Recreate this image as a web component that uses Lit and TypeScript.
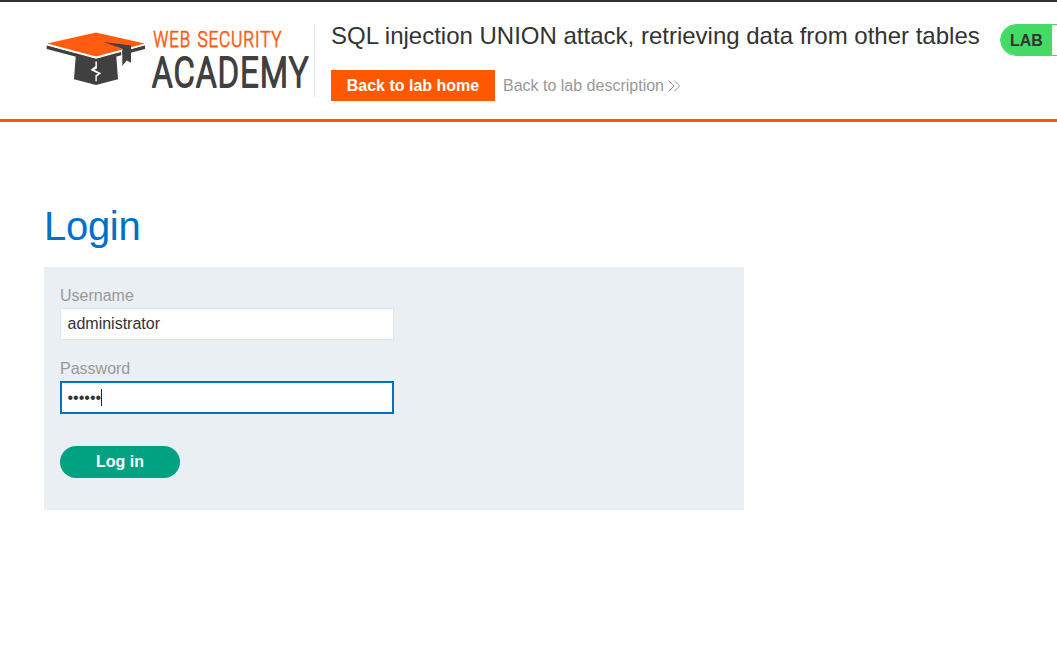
import { LitElement, html, css } from "lit";
import { customElement } from "lit/decorators.js";

@customElement("academy-logo")
class AcademyLogo extends LitElement {
  static styles = css`
    :host { display: block; width: 270px; height: 73px; flex: none; }
    svg { display: block; overflow: visible; }
    .small { font: 300 21.5px Roboto, sans-serif; fill: #ff5c0f; stroke: #ff5c0f; stroke-width: 0.75; stroke-linejoin: round; letter-spacing: 1px; }
    .large { font: 300 42px Roboto, sans-serif; fill: #404041; stroke: #404041; stroke-width: 2.2; stroke-linejoin: round; letter-spacing: 2px; }
  `;
  render() {
    return html`<svg width="270" height="73" viewBox="44 24 270 73" role="img" aria-label="Web Security Academy">
      <path fill="#404041" d="M76 52.5 L96 58 L116 52.5 L118 79.3 L96 85 L74 79.3 Z" />
      <path fill="#404041" d="M46.7 45.2 L96 58.6 L145 45.2 V49 L96 62 L46.7 49 Z" />
      <path fill="#fff" d="M44 42 H148 L145 45.3 L96 58.8 L46.7 45.3 Z" />
      <path fill="#ff5c0f" d="M47.2 43.4 L96 32.6 L144.8 43.4 L96 56.6 Z" />
      <path fill="#fff" d="M121.2 50 L122.3 49.6 V57 H121.2 Z" />
      <path fill="#404041" d="M103.3 42 L131 45.4 V62.8 L126.8 60.5 L122.3 65.7 V48.5 Z" />
      <path fill="#fff" d="M95.4 61.5 H96.9 V68.5 L94.3 69.7 L101.2 73.2 L96.8 76.6 V81.2 H95.4 V75.2 L98.2 73.7 L90.5 69.9 L95.4 66 Z" />
      <text class="small" x="153.3" y="47.2" textLength="37.5" lengthAdjust="spacingAndGlyphs">WEB</text>
      <text class="small" x="197.5" y="47.2" textLength="85" lengthAdjust="spacingAndGlyphs">SECURITY</text>
      <text class="large" x="152.3" y="87" textLength="157.5" lengthAdjust="spacingAndGlyphs">ACADEMY</text>
    </svg>`;
  }
}

@customElement("app-root")
class AppRoot extends LitElement {
  static styles = css`
    :host { display: block; height: 645px; overflow: hidden; background: #fff; color: #333332; font: 16px/20px "Liberation Sans", Arial, sans-serif; }
    * { box-sizing: border-box; }
    .header { display: flex; height: 122px; padding: 22px 0 0 44px; border-top: 2px solid #302f33; border-bottom: 3px solid #ff5800; overflow: hidden; }
    .intro { flex: none; width: 669px; height: 73px; padding-left: 16px; border-left: 1px solid #e4e4e4; white-space: nowrap; }
    h2 { margin: 0; font-size: 24px; line-height: 24px; font-weight: 400; }
    .links { display: flex; align-items: center; margin-top: 22px; }
    .home { width: 164px; height: 31px; line-height: 31px; text-align: center; background: #ff5800; color: #fff; font-weight: 700; text-decoration: none; }
    .back { display: flex; align-items: center; gap: 4px; margin-left: 8px; color: #999; text-decoration: none; }
    .status { display: flex; flex: none; width: 200px; height: 32px; margin-left: 17px; border: 1px solid #43db64; border-radius: 16px; overflow: hidden; }
    .lab { width: 51px; padding-left: 9px; background: #43db64; line-height: 31px; font-weight: 700; }
    .main { padding: 80px 44px 0; }
    h1 { margin: 0 0 17px; font-size: 40px; line-height: 48px; font-weight: 400; letter-spacing: -0.3px; color: #0070c9; }
    .form { display: flex; flex-direction: column; width: 700px; height: 243px; padding: 18px 16px; background: #eaeff3; }
    label { height: 23px; line-height: 21px; color: #999; }
    .input { display: flex; align-items: center; width: 334px; height: 32px; padding-left: 6.5px; margin-bottom: 18px; border: 1px solid #e4e4e4; background: #fff; }
    .focus { height: 33px; padding-left: 5.5px; border: 2px solid #0070c4; margin-bottom: 32px; }
    .caret { width: 1px; height: 17px; margin-left: -0.5px; background: #222; }
    button { width: 120px; height: 32px; padding: 0; border: 0; border-radius: 16px; background: #00a281; color: #fff; font: 700 16px/32px "Liberation Sans", Arial, sans-serif; }
  `;
  render() {
    return html`
      <header class="header">
        <academy-logo></academy-logo>
        <div class="intro">
          <h2>SQL injection UNION attack, retrieving data from other tables</h2>
          <div class="links">
            <a class="home">Back to lab home</a>
            <a class="back">Back to lab description
              <svg width="13" height="12" viewBox="0 0 13 12" fill="none" stroke="#999" stroke-width="1"><path d="M.5 .5 L6 6 L.5 11.5 M6.2 .5 L11.7 6 L6.2 11.5" /></svg>
            </a>
          </div>
        </div>
        <div class="status"><span class="lab">LAB</span></div>
      </header>
      <main class="main">
        <h1>Login</h1>
        <form class="form">
          <label>Username</label>
          <div class="input">administrator</div>
          <label>Password</label>
          <div class="input focus"><span>••••••</span><span class="caret"></span></div>
          <button type="button">Log in</button>
        </form>
      </main>`;
  }
}
